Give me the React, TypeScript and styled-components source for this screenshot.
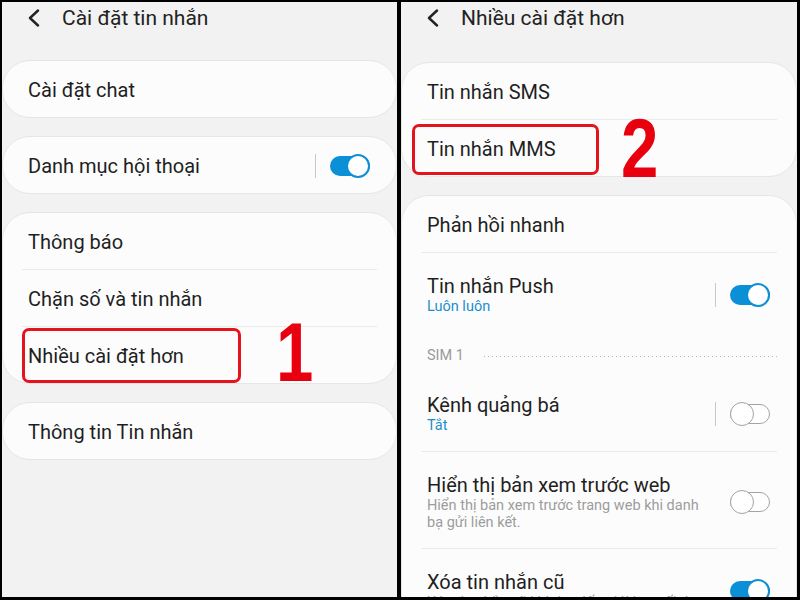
import styled, { createGlobalStyle } from "styled-components";

const GlobalStyle = createGlobalStyle`
  html, body {
    margin: 0;
    padding: 0;
    background: #000;
  }
  body {
    font-family: Roboto, "Noto Sans", sans-serif;
  }
`;

const BackIcon = () => (
  <svg width="14" height="18" viewBox="0 0 14 18">
    <path d="M11 1.5 L3 9 L11 16.5" fill="none" stroke="#222" strokeWidth="2.4" strokeLinecap="round" strokeLinejoin="round" />
  </svg>
);

const App = () => {
  return (
    <>
      <GlobalStyle />
      <Frame>
        <Panel>
          <Header>
            <BackIcon />
            <HeaderTitle>Cài đặt tin nhắn</HeaderTitle>
          </Header>
          <CardList $top={26}>
            <Card>
              <Row>
                <Title>Cài đặt chat</Title>
              </Row>
            </Card>
            <Card>
              <Row>
                <Title>Danh mục hội thoại</Title>
                <Control>
                  <VLine />
                  <Toggle $on />
                </Control>
              </Row>
            </Card>
            <Card>
              <Row>
                <Title>Thông báo</Title>
              </Row>
              <Divider />
              <Row>
                <Title>Chặn số và tin nhắn</Title>
              </Row>
              <Divider />
              <Row>
                <Title>Nhiều cài đặt hơn</Title>
                <MarkBox $left={19} $top={1} $w={219} $h={55} />
                <Digit $left={273} $top={-17}>1</Digit>
              </Row>
            </Card>
            <Card>
              <Row>
                <Title>Thông tin Tin nhắn</Title>
              </Row>
            </Card>
          </CardList>
        </Panel>

        <Panel>
          <Header>
            <BackIcon />
            <HeaderTitle>Nhiều cài đặt hơn</HeaderTitle>
          </Header>
          <CardList $top={28}>
            <Card>
              <Row>
                <Title>Tin nhắn SMS</Title>
              </Row>
              <Divider />
              <Row>
                <Title>Tin nhắn MMS</Title>
                <MarkBox $left={10} $top={4} $w={187} $h={51} />
                <Digit $left={219} $top={-14}>2</Digit>
              </Row>
            </Card>
            <Card>
              <Row>
                <Title>Phản hồi nhanh</Title>
              </Row>
              <Divider />
              <Row $multi>
                <TextBlock>
                  <Title>Tin nhắn Push</Title>
                  <Sub $blue>Luôn luôn</Sub>
                </TextBlock>
                <Control>
                  <VLine />
                  <Toggle $on />
                </Control>
              </Row>
              <SectionHead>
                <SectionLabel>SIM 1</SectionLabel>
                <Dots />
              </SectionHead>
              <Row $multi>
                <TextBlock>
                  <Title>Kênh quảng bá</Title>
                  <Sub $blue>Tắt</Sub>
                </TextBlock>
                <Control>
                  <VLine />
                  <Toggle />
                </Control>
              </Row>
              <Divider />
              <Row $multi>
                <TextBlock>
                  <Title>Hiển thị bản xem trước web</Title>
                  <Sub>Hiển thị bản xem trước trang web khi danh bạ gửi liên kết.</Sub>
                </TextBlock>
                <Control>
                  <Toggle />
                </Control>
              </Row>
              <Divider />
              <Row $multi>
                <TextBlock>
                  <Title>Xóa tin nhắn cũ</Title>
                  <Sub>Xóa tin nhắn cũ khi đạt đến giới hạn tối đa.</Sub>
                </TextBlock>
                <Control>
                  <Toggle $on />
                </Control>
              </Row>
            </Card>
          </CardList>
        </Panel>
      </Frame>
    </>
  );
};

const Frame = styled.div`
  width: 800px;
  height: 600px;
  box-sizing: border-box;
  background: #000;
  padding: 2px 3px 3px 2px;
  display: grid;
  grid-template-columns: 395px 396px;
  column-gap: 4px;
`;

const Panel = styled.div`
  background: #f2f2f2;
  overflow: hidden;
  display: flex;
  flex-direction: column;
`;

const Header = styled.div`
  height: 32px;
  display: flex;
  align-items: center;
  padding-left: 25px;
  flex-shrink: 0;
`;

const HeaderTitle = styled.div`
  margin-left: 21px;
  font-size: 21px;
  color: #222;
`;

const CardList = styled.div<{ $top: number }>`
  display: flex;
  flex-direction: column;
  gap: 18px;
  padding-top: ${(p) => p.$top}px;
`;

const Card = styled.div`
  background: #fcfcfc;
  border: 1px solid #e6e6e6;
  border-radius: 28px;
  flex-shrink: 0;
`;

const Row = styled.div<{ $multi?: boolean }>`
  position: relative;
  display: flex;
  align-items: center;
  min-height: 56px;
  box-sizing: border-box;
  padding: ${(p) => (p.$multi ? "21px 26px 17px 25px" : "1px 26px 0 25px")};
`;

const Divider = styled.div`
  height: 1px;
  background: #ebebeb;
  margin: 0 19px;
`;

const TextBlock = styled.div`
  display: flex;
  flex-direction: column;
  max-width: 280px;
`;

const Title = styled.div`
  font-size: 20px;
  line-height: 24px;
  color: #1f1f1f;
`;

const Sub = styled.div<{ $blue?: boolean }>`
  font-size: 14.5px;
  line-height: 17px;
  color: ${(p) => (p.$blue ? "#1a8fcb" : "#9d9d9d")};
`;

const Control = styled.div`
  margin-left: auto;
  display: flex;
  align-items: center;
  gap: 14px;
`;

const VLine = styled.div`
  width: 1px;
  height: 24px;
  background: #c9c9c9;
`;

const Toggle = styled.div<{ $on?: boolean }>`
  position: relative;
  width: 40px;
  height: 24px;
  flex-shrink: 0;

  &::before {
    content: "";
    position: absolute;
    left: 0;
    right: 0;
    top: 2px;
    bottom: 2px;
    box-sizing: border-box;
    border-radius: 10px;
    background: ${(p) => (p.$on ? "#0b8fd6" : "#fff")};
    border: ${(p) => (p.$on ? "none" : "1.5px solid #a3a3a3")};
  }

  &::after {
    content: "";
    position: absolute;
    top: 0;
    left: ${(p) => (p.$on ? "16px" : "0")};
    width: 24px;
    height: 24px;
    box-sizing: border-box;
    border-radius: 50%;
    background: #fff;
    border: ${(p) => (p.$on ? "2px solid #0b8fd6" : "1.5px solid #a3a3a3")};
  }
`;

const SectionHead = styled.div`
  display: flex;
  align-items: center;
  gap: 20px;
  padding: 16px 18px 8px 25px;
`;

const SectionLabel = styled.div`
  font-size: 14.5px;
  line-height: 16px;
  color: #9a9a9a;
`;

const Dots = styled.div`
  flex: 1;
  height: 1px;
  background-image: linear-gradient(to right, #b5b5b5 1px, transparent 1px);
  background-size: 4px 1px;
  background-repeat: repeat-x;
`;

const MarkBox = styled.span<{ $left: number; $top: number; $w: number; $h: number }>`
  position: absolute;
  left: ${(p) => p.$left}px;
  top: ${(p) => p.$top}px;
  width: ${(p) => p.$w}px;
  height: ${(p) => p.$h}px;
  box-sizing: border-box;
  border: 3px solid #e5141c;
  border-radius: 7px;
  pointer-events: none;
`;

const Digit = styled.span<{ $left: number; $top: number }>`
  position: absolute;
  left: ${(p) => p.$left}px;
  top: ${(p) => p.$top}px;
  font-family: "Liberation Sans", Arial, sans-serif;
  font-weight: 700;
  font-size: 84px;
  line-height: 1;
  color: #e8000e;
  transform: scaleX(0.8);
  transform-origin: left top;
`;

export default App;
